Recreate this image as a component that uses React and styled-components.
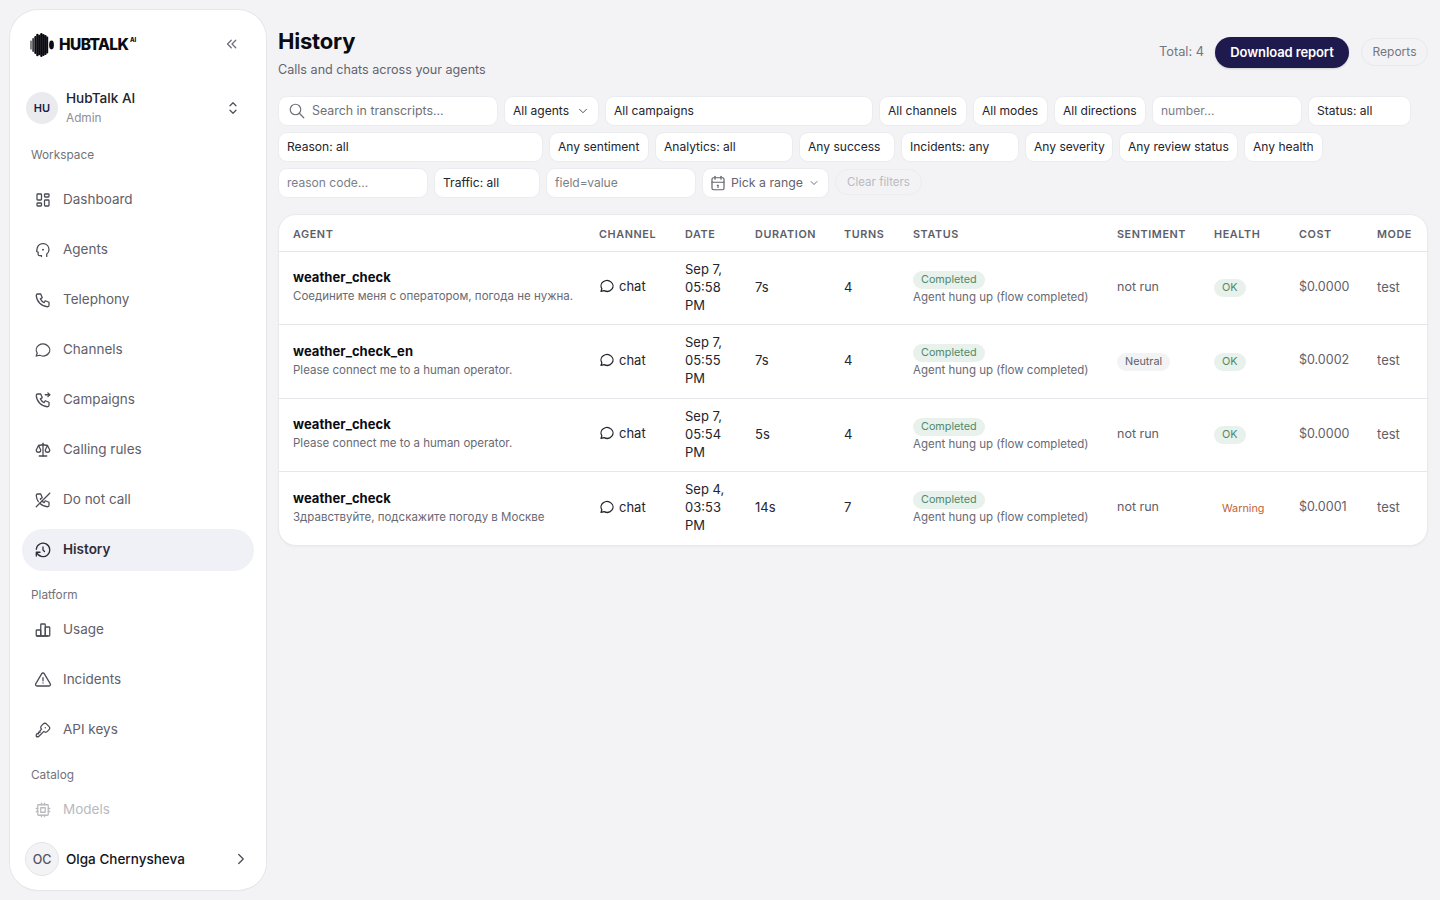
import React from 'react';
import styled, { createGlobalStyle } from 'styled-components';
import {
  TbChevronsLeft, TbSelector, TbLayoutDashboard, TbPhone, TbMessageCircle, TbPhoneOutgoing, TbScale, TbPhoneOff, TbHistory,
  TbChartBar, TbAlertTriangle, TbKey, TbCpu, TbChevronRight, TbChevronDown, TbSearch, TbCalendar,
} from 'react-icons/tb';

const Global = createGlobalStyle`
  * { box-sizing: border-box; }
  html, body { margin: 0; height: 100%; }
  body { background: #f3f3f5; font-family: Inter, "Noto Sans", sans-serif; color: #0b0b12; overflow: hidden; }
`;

const Page = styled.div`
  display: flex; gap: 12px; height: 900px; padding: 10px 12px 10px 10px;
`;
const Sidebar = styled.aside`
  width: 256px; flex: none; height: 880px; background: #fff; border-radius: 28px;
  box-shadow: 0 0 0 1px #e6e7ea, 0 1px 2px rgba(0,0,0,.05);
  display: flex; flex-direction: column; overflow: hidden;
`;
const Brand = styled.div`
  height: 68px; padding: 0 25px 0 20px; display: flex; align-items: center; justify-content: space-between; flex: none;
`;
const Logo = styled.div`display: flex; align-items: center; gap: 3px; padding-top: 2px;`;
const LogoText = styled.span`
  font-size: 15.5px; font-weight: 800; letter-spacing: -0.6px; color: #0b0b12; line-height: 1; position: relative; padding-right: 8px;
  sup { position: absolute; right: 0; top: 0; font-size: 6px; font-weight: 800; letter-spacing: 0; line-height: 1; }
`;
const Collapse = styled.span`color: #6d6e78; display: flex;`;
const Org = styled.div`
  height: 48px; margin-top: 6px; padding: 0 24px 0 16px; display: flex; align-items: center; gap: 8px; flex: none;
`;
const OrgAvatar = styled.div`
  width: 32px; height: 32px; border-radius: 50%; background: #eaebef; color: #1f1a4d; font-size: 11px; font-weight: 600;
  display: flex; align-items: center; justify-content: center; flex: none;
`;
const OrgText = styled.div`flex: 1; display: flex; flex-direction: column; gap: 3px;`;
const OrgName = styled.span`font-size: 13.6px; line-height: 18px; color: #23232c; font-weight: 500; margin-top: -2px;`;
const OrgRole = styled.span`font-size: 11.8px; line-height: 16px; color: #8d8e96;`;
const Nav = styled.nav`flex: 1; overflow: hidden; padding: 0 12px; display: flex; flex-direction: column;`;
const SectionLabel = styled.div`
  font-size: 11.8px; line-height: 16px; color: #71727a; padding: 0 9px; margin: ${p => p.$top}px 0 ${p => p.$bottom}px;
`;
const NavItem = styled.div`
  height: 42px; flex: none; margin-bottom: 8px; display: flex; align-items: center; gap: 11px; padding: 0 12px 2px; border-radius: 21px;
  font-size: 13.5px; line-height: 18px;
  background: ${p => p.$active ? '#f0f1f6' : 'transparent'};
  color: ${p => p.$active ? '#2d2d38' : p.$muted ? '#b9bac0' : '#5f6069'};
  font-weight: ${p => p.$active ? 600 : 400};
  svg { flex: none; margin-top: 2px; color: ${p => p.$active ? '#2d2d38' : p.$muted ? '#b9bac0' : '#4a4b54'}; }
`;
const UserRow = styled.div`
  height: 54px; flex: none; margin-bottom: 4px; padding: 0 16px 0 15px; display: flex; align-items: center; gap: 7px; background: #fff;
`;
const UserAvatar = styled.div`
  width: 34px; height: 34px; border-radius: 50%; background: #f3f3f5; border: 1px solid #e4e4e8; color: #54555e; font-size: 12.5px; font-weight: 500;
  display: flex; align-items: center; justify-content: center; flex: none;
`;
const UserName = styled.span`flex: 1; font-size: 13.5px; font-weight: 500; color: #14141c;`;
const Main = styled.main`flex: 1; min-width: 0; display: flex; flex-direction: column;`;
const Header = styled.header`
  height: 86px; flex: none; display: flex; justify-content: space-between; align-items: flex-start;
`;
const TitleBlock = styled.div`display: flex; flex-direction: column; padding-top: 17px;`;
const Title = styled.h1`margin: 0; font-size: 22px; line-height: 28px; font-weight: 700; color: #0b0b12; letter-spacing: -0.2px;`;
const Subtitle = styled.p`margin: 6px 0 0; font-size: 12.6px; line-height: 18px; color: #63646d;`;
const Actions = styled.div`display: flex; align-items: center; padding-top: 27px;`;
const Total = styled.span`font-size: 12.8px; color: #75767e; margin: 0 11px 3px 0;`;
const Primary = styled.button`
  height: 31px; width: 134px; border: 0; border-radius: 16px; background: #1f1a4d; color: #fff; font: 600 13px Inter, sans-serif;
  letter-spacing: -0.1px; box-shadow: 0 1px 2px rgba(0,0,0,.15); padding: 0 0 2px;
`;
const Ghost = styled.button`
  height: 28px; width: 67px; margin: 0 0 1px 12px; border: 1px solid #e8e9ec; border-radius: 14px; background: transparent; color: #75767e;
  font: 400 12px Inter, sans-serif; padding: 0 0 1px;
`;
const Filters = styled.div`display: flex; flex-direction: column; gap: 6px; flex: none;`;
const FilterRow = styled.div`display: flex; gap: 6px; align-items: center;`;
const Field = styled.div`
  height: 30px; width: ${p => p.$w}px; flex: none; background: #fff; border: 1px solid #ebecef; border-radius: 9px; padding: 0 8px;
  display: flex; align-items: center; justify-content: space-between; font-size: 12.05px; line-height: 16px; white-space: nowrap;
  color: ${p => p.$placeholder ? '#7d7e86' : '#24242d'};
`;
const SearchField = styled(Field)`justify-content: flex-start; gap: 6px; padding: 0 9px; color: #6f7078; font-size: 12.4px;`;
const RangeField = styled(Field)`justify-content: flex-start; gap: 4px; color: #63646d; padding: 0 8px 0 6px; font-size: 12.3px;`;
const RangeText = styled.span`flex: 1;`;
const ClearButton = styled.button`
  height: 26px; width: 87px; border: 1px solid #ebecef; border-radius: 13px; background: transparent; color: #b9bac0;
  font: 400 11.5px Inter, sans-serif; padding: 0; margin-top: -2px;
`;
const Card = styled.section`
  margin-top: 16px; width: 1150px; background: #fff; border-radius: 18px; overflow: hidden; border: 1px solid #e8e9ec; box-shadow: 0 1px 2px rgba(0,0,0,.04);
`;
const Table = styled.table`
  width: 100%; border-collapse: collapse; table-layout: fixed;
`;
const Th = styled.th`
  width: ${p => p.$w}px; height: 36px; padding: 4px 14px 0; text-align: left; font-size: 10.8px; font-weight: 600; letter-spacing: 0.6px; color: #5d5e68;
  text-transform: uppercase; border-bottom: 1px solid #e6e7ea; white-space: nowrap;
`;
const Tr = styled.tr`
  &:not(:last-child) td { border-bottom: 1px solid #e6e7ea; }
`;
const Td = styled.td`
  padding: ${p => p.$even ? '10px 14px 9px' : '8px 14px 10px'}; font-size: ${p => p.$small ? 12.5 : 13}px; line-height: 18.17px; vertical-align: middle; color: ${p => p.$color || '#24242d'};
`;
const AgentName = styled.div`font-size: 13px; line-height: 18px; font-weight: 700; color: #0b0b12; letter-spacing: 0.06px;`;
const AgentText = styled.div`font-size: 11.5px; line-height: 18px; margin-top: 1px; color: #696a73; white-space: nowrap;`;
const ChannelCell = styled.div`display: flex; align-items: center; gap: 4px; color: #24242d; padding-bottom: 4px;`;
const Pill = styled.span`
  display: block; width: fit-content; height: 18px; line-height: 18px; padding: 0 8px; border-radius: 9px; font-size: 10.8px;
  background: ${p => p.$tone === 'green' ? '#e8f1ec' : p.$tone === 'gray' ? '#f2f3f5' : 'transparent'};
  color: ${p => p.$tone === 'green' ? '#4e8a6b' : p.$tone === 'gray' ? '#5f6069' : '#c0623a'};
`;
const StatusNote = styled.div`font-size: 11.5px; line-height: 17px; color: #696a73; white-space: nowrap;`;

const AgentsIcon = ({ size = 18, strokeWidth = 1.7 }) => (
  <svg width={size} height={size} viewBox="0 0 24 24" fill="none" stroke="currentColor" strokeWidth={strokeWidth} strokeLinecap="round" strokeLinejoin="round">
    <path d="M17 20.5v-3.2c2-1.5 3-3.6 3-5.8a8 8 0 0 0-15.7-2.2L3.5 14l2 .8v2.7a2 2 0 0 0 2 2H10v1.2" />
    <path d="M12 11.5h.01" strokeWidth="2.6" />
  </svg>
);
const Waveform = () => (
  <svg width="26" height="24" viewBox="0 0 26 24" fill="#0b0b12">
    {[[0.5,7.5,1],[2.4,5,1.4],[4.3,3,2],[6.2,0.8,2.4],[8.2,1.8,2.4],[10.2,0,2.4],[12.2,1,2.4],[14.2,2,2.4],[16.2,3.5,2]].map(([x, t, w], i) => (
      <rect key={i} x={x} y={t} width={w} height={24 - 2 * t} rx={w / 2} />
    ))}
    <ellipse cx="21.5" cy="12" rx="2.4" ry="4.4" />
  </svg>
);

const top = [
  ['Dashboard', TbLayoutDashboard], ['Agents', AgentsIcon], ['Telephony', TbPhone], ['Channels', TbMessageCircle],
  ['Campaigns', TbPhoneOutgoing], ['Calling rules', TbScale], ['Do not call', TbPhoneOff],
];
const platform = [['Usage', TbChartBar], ['Incidents', TbAlertTriangle], ['API keys', TbKey]];
const cols = [['Agent', 306], ['Channel', 86], ['Date', 70], ['Duration', 89], ['Turns', 69], ['Status', 204], ['Sentiment', 97], ['Health', 85], ['Cost', 78], ['Mode', 64]];
const rows = [
  { name: 'weather_check', text: 'Соедините меня с оператором, погода не нужна.', date: ['Sep 7,', '05:58', 'PM'], dur: '7s', turns: 4, sentiment: null, health: 'OK', cost: '$0.0000' },
  { name: 'weather_check_en', text: 'Please connect me to a human operator.', date: ['Sep 7,', '05:55', 'PM'], dur: '7s', turns: 4, sentiment: 'Neutral', health: 'OK', cost: '$0.0002' },
  { name: 'weather_check', text: 'Please connect me to a human operator.', date: ['Sep 7,', '05:54', 'PM'], dur: '5s', turns: 4, sentiment: null, health: 'OK', cost: '$0.0000' },
  { name: 'weather_check', text: 'Здравствуйте, подскажите погоду в Москве', date: ['Sep 4,', '03:53', 'PM'], dur: '14s', turns: 7, sentiment: null, health: 'Warning', cost: '$0.0001' },
];

function Item({ icon: Icon, label, ...rest }) {
  return <NavItem {...rest}><Icon size={18} strokeWidth={1.7} />{label}</NavItem>;
}

export default function App() {
  return (
    <>
      <Global />
      <Page>
        <Sidebar>
          <Brand>
            <Logo><Waveform /><LogoText>HUBTALK<sup>AI</sup></LogoText></Logo>
            <Collapse><TbChevronsLeft size={18} strokeWidth={1.7} /></Collapse>
          </Brand>
          <Org>
            <OrgAvatar>HU</OrgAvatar>
            <OrgText><OrgName>HubTalk AI</OrgName><OrgRole>Admin</OrgRole></OrgText>
            <TbSelector size={18} strokeWidth={1.7} color="#52535c" />
          </Org>
          <Nav>
            <SectionLabel $top={15} $bottom={16}>Workspace</SectionLabel>
            {top.map(([l, I]) => <Item key={l} icon={I} label={l} />)}
            <Item icon={TbHistory} label="History" $active />
            <SectionLabel $top={8} $bottom={6}>Platform</SectionLabel>
            {platform.map(([l, I]) => <Item key={l} icon={I} label={l} />)}
            <SectionLabel $top={8} $bottom={6}>Catalog</SectionLabel>
            <Item icon={TbCpu} label="Models" $muted />
          </Nav>
          <UserRow>
            <UserAvatar>OC</UserAvatar>
            <UserName>Olga Chernysheva</UserName>
            <TbChevronRight size={18} strokeWidth={1.8} color="#52535c" />
          </UserRow>
        </Sidebar>
        <Main>
          <Header>
            <TitleBlock>
              <Title>History</Title>
              <Subtitle>Calls and chats across your agents</Subtitle>
            </TitleBlock>
            <Actions>
              <Total>Total: 4</Total>
              <Primary>Download report</Primary>
              <Ghost>Reports</Ghost>
            </Actions>
          </Header>
          <Filters>
            <FilterRow>
              <SearchField $w={220}><TbSearch size={18} strokeWidth={1.6} />Search in transcripts...</SearchField>
              <Field $w={95}>All agents<TbChevronDown size={14} strokeWidth={1.7} color="#52535c" /></Field>
              <Field $w={268}>All campaigns</Field>
              <Field $w={88}>All channels</Field>
              <Field $w={75}>All modes</Field>
              <Field $w={92}>All directions</Field>
              <Field $w={150} $placeholder>number...</Field>
              <Field $w={103}>Status: all</Field>
            </FilterRow>
            <FilterRow>
              <Field $w={265}>Reason: all</Field>
              <Field $w={100}>Any sentiment</Field>
              <Field $w={138}>Analytics: all</Field>
              <Field $w={96}>Any success</Field>
              <Field $w={118}>Incidents: any</Field>
              <Field $w={88}>Any severity</Field>
              <Field $w={119}>Any review status</Field>
              <Field $w={79}>Any health</Field>
            </FilterRow>
            <FilterRow>
              <Field $w={150} $placeholder>reason code...</Field>
              <Field $w={106}>Traffic: all</Field>
              <Field $w={150} $placeholder>field=value</Field>
              <RangeField $w={127}><TbCalendar size={18} strokeWidth={1.6} /><RangeText>Pick a range</RangeText><TbChevronDown size={12} strokeWidth={1.8} /></RangeField>
              <ClearButton>Clear filters</ClearButton>
            </FilterRow>
          </Filters>
          <Card>
            <Table>
              <thead><tr>{cols.map(([c, w]) => <Th key={c} $w={w}>{c}</Th>)}</tr></thead>
              <tbody>
                {rows.map((r, i) => (
                  <Tr key={i}>
                    <Td><AgentName>{r.name}</AgentName><AgentText>{r.text}</AgentText></Td>
                    <Td $even><ChannelCell><TbMessageCircle size={16} strokeWidth={1.9} /><span>chat</span></ChannelCell></Td>
                    <Td>{r.date.map(d => <div key={d}>{d}</div>)}</Td>
                    <Td>{r.dur}</Td>
                    <Td>{r.turns}</Td>
                    <Td $even><Pill $tone="green">Completed</Pill><StatusNote>Agent hung up (flow completed)</StatusNote></Td>
                    <Td $small $even={!!r.sentiment} $color="#5f6069">{r.sentiment ? <Pill $tone="gray">{r.sentiment}</Pill> : 'not run'}</Td>
                    <Td $even><Pill $tone={r.health === 'OK' ? 'green' : 'warn'}>{r.health}</Pill></Td>
                    <Td $small $color="#5f6069">{r.cost}</Td>
                    <Td $color="#5f6069">test</Td>
                  </Tr>
                ))}
              </tbody>
            </Table>
          </Card>
        </Main>
      </Page>
    </>
  );
}
